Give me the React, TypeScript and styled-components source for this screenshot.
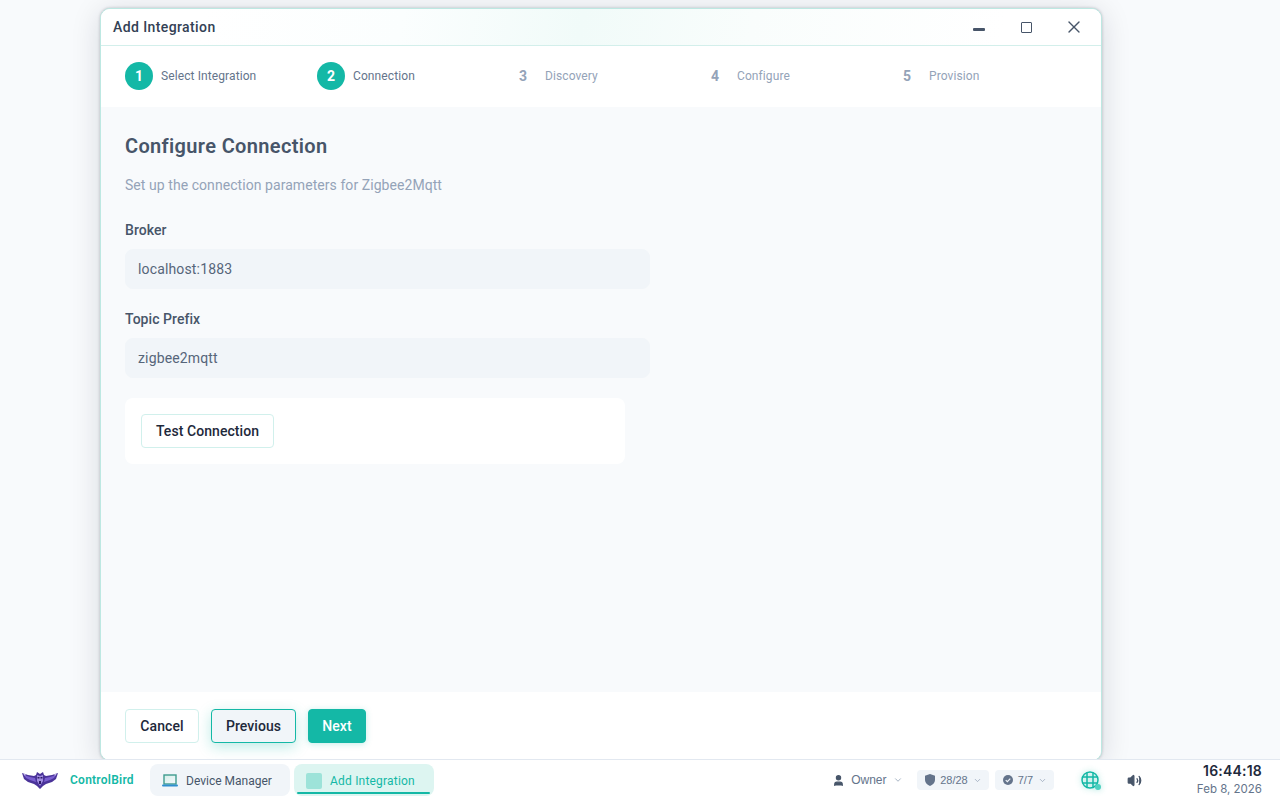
import React from 'react';
import styled, { createGlobalStyle } from 'styled-components';
import { ChevronDown, User, Volume2, X } from 'lucide-react';

const GlobalStyle = createGlobalStyle`
  html, body {
    margin: 0;
    height: 100%;
  }
  body {
    background: #f8fafc;
    font-family: Roboto, "Noto Sans", sans-serif;
    overflow: hidden;
  }
  #root {
    height: 100%;
  }
`;

const steps = [
  { num: 1, label: 'Select Integration', active: true },
  { num: 2, label: 'Connection', active: true },
  { num: 3, label: 'Discovery', active: false },
  { num: 4, label: 'Configure', active: false },
  { num: 5, label: 'Provision', active: false },
];

const fields = [
  { label: 'Broker', value: 'localhost:1883' },
  { label: 'Topic Prefix', value: 'zigbee2mqtt' },
];

const OwlLogo = () => (
  <svg width="36" height="17" viewBox="0 0 36 17">
    <path d="M0 1 L6 3 L12 4 L14 3 L15 0 L18 2 L21 0 L22 3 L24 4 L30 3 L36 1 L34 7 L30 10 L24 12 L21 14 L18 17 L15 14 L12 12 L6 10 L2 7 Z" fill="#4a3399" />
    <path d="M2 3 L8 5 L13 6 L14 10 L8 8 L4 6 Z M34 3 L28 5 L23 6 L22 10 L28 8 L32 6 Z" fill="#7a5fd0" />
    <path d="M1 1.500 L4 2.500 L3 4 Z M35 1.500 L32 2.500 L33 4 Z" fill="#c9bdf0" />
    <path d="M15 3 L18 4 L21 3 L21 9 L18 14 L15 9 Z" fill="#a08ce0" />
    <path d="M15.500 5 h2 v1.500 h-2 Z M18.500 5 h2 v1.500 h-2 Z M17 9 h2 v3 h-2 Z" fill="#2d1c66" />
  </svg>
);

const LaptopIcon = () => (
  <svg width="16" height="13" viewBox="0 0 16 13">
    <defs>
      <linearGradient id="screen" x1="0" y1="0" x2="1" y2="1">
        <stop offset="0" stopColor="#d5efe9" />
        <stop offset="1" stopColor="#f4f8fc" />
      </linearGradient>
    </defs>
    <rect x="2" y="1" width="12" height="9" fill="url(#screen)" stroke="#3f9c8f" strokeWidth="1.400" />
    <rect x="0" y="10.500" width="16" height="2" rx="1" fill="#2f8fd0" />
  </svg>
);

const ShieldIcon = () => (
  <svg width="10" height="12" viewBox="0 0 10 12">
    <path d="M5 0 L10 1.700 V6 C10 9 7.500 11 5 12 C2.500 11 0 9 0 6 V1.700 Z" fill="#64748b" />
  </svg>
);

const CheckBadgeIcon = () => (
  <svg width="10" height="10" viewBox="0 0 11 11">
    <circle cx="5.500" cy="5.500" r="5.500" fill="#64748b" />
    <path d="M3 5.700 L4.800 7.400 L8 4" fill="none" stroke="#f1f5f9" strokeWidth="1.300" />
  </svg>
);

const GlobeIcon = () => (
  <svg width="18" height="18" viewBox="0 0 18 18" fill="none" stroke="#14b8a6" strokeWidth="1.500">
    <circle cx="9" cy="9" r="8" />
    <path d="M1.500 6 H16.500 M1.500 12 H16.500 M6 1.500 V16.500 M12 1.500 V16.500" />
  </svg>
);

const App: React.FC = () => {
  return (
    <Desktop>
      <GlobalStyle />
      <Workspace>
        <Window>
          <TitleBar>
            <Title>Add Integration</Title>
            <WindowControls>
              <ControlButton aria-label="minimize">
                <MinimizeGlyph />
              </ControlButton>
              <ControlButton aria-label="maximize">
                <MaximizeGlyph />
              </ControlButton>
              <ControlButton aria-label="close">
                <X size={20} strokeWidth={1.600} />
              </ControlButton>
            </WindowControls>
          </TitleBar>

          <Stepper>
            {steps.map((step) => (
              <Step key={step.num}>
                <StepBullet $active={step.active}>{step.num}</StepBullet>
                <StepLabel $active={step.active}>{step.label}</StepLabel>
              </Step>
            ))}
          </Stepper>

          <Content>
            <Heading>Configure Connection</Heading>
            <Description>Set up the connection parameters for Zigbee2Mqtt</Description>
            {fields.map((field) => (
              <Field key={field.label}>
                <FieldLabel>{field.label}</FieldLabel>
                <FieldInput defaultValue={field.value} />
              </Field>
            ))}
            <TestCard>
              <TestButton>Test Connection</TestButton>
            </TestCard>
          </Content>

          <Footer>
            <CancelButton>Cancel</CancelButton>
            <PreviousButton>Previous</PreviousButton>
            <NextButton>Next</NextButton>
          </Footer>
        </Window>
      </Workspace>

      <Dock>
        <Brand>
          <OwlLogo />
          <BrandName>ControlBird</BrandName>
        </Brand>
        <Task>
          <LaptopIcon />
          <TaskLabel>Device Manager</TaskLabel>
        </Task>
        <Task $current>
          <TaskSquare />
          <TaskLabel $current>Add Integration</TaskLabel>
          <TaskUnderline />
        </Task>

        <Tray>
          <OwnerMenu>
            <User size={13} fill="#475569" stroke="#475569" />
            <span>Owner</span>
            <ChevronDown size={10} color="#94a3b8" />
          </OwnerMenu>
          <Pills>
            <Pill>
              <ShieldIcon />
              <span>28/28</span>
              <ChevronDown size={9} color="#94a3b8" />
            </Pill>
            <Pill>
              <CheckBadgeIcon />
              <span>7/7</span>
              <ChevronDown size={9} color="#94a3b8" />
            </Pill>
          </Pills>
          <NetworkButton>
            <GlobeIcon />
            <NetworkDot />
          </NetworkButton>
          <VolumeButton>
            <Volume2 size={15} fill="#475569" stroke="#475569" />
          </VolumeButton>
          <Clock>
            <Time>16:44:18</Time>
            <DateText>Feb 8, 2026</DateText>
          </Clock>
        </Tray>
      </Dock>
    </Desktop>
  );
};

export default App;

const Desktop = styled.div`
  display: flex;
  flex-direction: column;
  height: 800px;
`;

const Workspace = styled.main`
  flex: 1;
  min-height: 0;
  padding: 8px 178px 0 100px;
`;

const Window = styled.section`
  display: flex;
  flex-direction: column;
  box-sizing: border-box;
  width: 1002px;
  height: 753px;
  background: #fff;
  border: 1px solid #bde8e2;
  border-radius: 10px;
  box-shadow: 0 0 3px rgba(15, 23, 42, 0.25), 0 4px 30px rgba(15, 23, 42, 0.14);
  overflow: hidden;
`;

const TitleBar = styled.header`
  display: flex;
  align-items: center;
  justify-content: space-between;
  flex: none;
  box-sizing: border-box;
  height: 37px;
  padding: 0 7px 0 12px;
  background: linear-gradient(100deg, #fff 10%, #fbfefe 30%, #f1fbf9 48%, #f9fdfc 65%, #fff 90%);
  border-bottom: 1px solid #d3efeb;
`;

const Title = styled.h1`
  margin: 0;
  font-size: 14px;
  font-weight: 500;
  letter-spacing: 0.4px;
  color: #334155;
`;

const WindowControls = styled.div`
  display: flex;
  gap: 7.500px;
`;

const ControlButton = styled.button`
  display: flex;
  align-items: center;
  justify-content: center;
  width: 40px;
  height: 28px;
  padding: 0;
  background: none;
  border: none;
  color: #475569;
`;

const MinimizeGlyph = styled.span`
  width: 12px;
  height: 3px;
  margin-top: 4px;
  background: #475569;
  border-radius: 1px;
`;

const MaximizeGlyph = styled.span`
  box-sizing: border-box;
  width: 11px;
  height: 11px;
  border: 1.500px solid #475569;
  border-radius: 1px;
`;

const Stepper = styled.nav`
  display: flex;
  flex: none;
  box-sizing: border-box;
  height: 61px;
  align-items: center;
  padding: 0 24px 1px;
  background: #fff;
`;

const Step = styled.div`
  display: flex;
  flex: none;
  align-items: center;
  gap: 8px;
  width: 192px;
`;

const StepBullet = styled.span<{ $active: boolean }>`
  display: flex;
  align-items: center;
  justify-content: center;
  width: 28px;
  height: 28px;
  border-radius: 50%;
  font-size: 14px;
  font-weight: 700;
  color: ${({ $active }) => ($active ? '#fff' : '#94a3b8')};
  background: ${({ $active }) => ($active ? '#14b8a6' : 'transparent')};
`;

const StepLabel = styled.span<{ $active: boolean }>`
  font-size: 12px;
  letter-spacing: 0.1px;
  color: ${({ $active }) => ($active ? '#64748b' : '#94a3b8')};
`;

const Content = styled.div`
  display: flex;
  flex-direction: column;
  flex: 1;
  min-height: 0;
  padding: 24px;
  background: #f8fafc;
`;

const Heading = styled.h2`
  margin: 0;
  font-size: 20px;
  line-height: 30px;
  font-weight: 600;
  letter-spacing: 0.35px;
  color: #475569;
`;

const Description = styled.p`
  margin: 14px 0 0;
  font-size: 14px;
  line-height: 20px;
  letter-spacing: 0.06px;
  color: #94a3b8;
`;

const Field = styled.label`
  display: flex;
  flex-direction: column;
  width: 525px;
  margin-top: 25px;
  & + & {
    margin-top: 20px;
  }
`;

const FieldLabel = styled.span`
  font-size: 14px;
  font-weight: 500;
  line-height: 20px;
  letter-spacing: 0.05px;
  color: #475569;
  margin-bottom: 9px;
`;

const FieldInput = styled.input`
  box-sizing: border-box;
  height: 40px;
  padding: 0 12px;
  background: #f1f5f9;
  border: 1px solid #f1f5f9;
  border-radius: 8px;
  font-family: inherit;
  font-size: 14px;
  letter-spacing: 0.15px;
  color: #56657a;
  outline: none;
`;

const TestCard = styled.div`
  box-sizing: border-box;
  width: 500px;
  height: 66px;
  margin-top: 20px;
  padding: 16px;
  background: #fff;
  border-radius: 8px;
`;

const ButtonBase = styled.button`
  box-sizing: border-box;
  height: 34px;
  padding: 0;
  border-radius: 4px;
  font-family: inherit;
  font-size: 14px;
  font-weight: 500;
  letter-spacing: 0.07px;
`;

const TestButton = styled(ButtonBase)`
  width: 133px;
  background: #fff;
  border: 1px solid #d1f0ec;
  color: #1e293b;
`;

const Footer = styled.footer`
  display: flex;
  flex: none;
  align-items: center;
  gap: 12px;
  box-sizing: border-box;
  height: 68px;
  padding: 0 24px;
  background: #fff;
`;

const CancelButton = styled(ButtonBase)`
  width: 74px;
  background: #fff;
  border: 1px solid #d1f0ec;
  color: #1e293b;
`;

const PreviousButton = styled(ButtonBase)`
  width: 85px;
  background: #f1f5f9;
  border: 1px solid #14b8a6;
  color: #1e293b;
  box-shadow: 0 4px 14px rgba(20, 184, 166, 0.28);
`;

const NextButton = styled(ButtonBase)`
  width: 58px;
  background: #14b8a6;
  border: 1px solid #14b8a6;
  color: #fff;
  box-shadow: 0 1px 6px rgba(20, 184, 166, 0.25);
`;

const Dock = styled.footer`
  display: flex;
  flex: none;
  align-items: center;
  box-sizing: border-box;
  height: 41px;
  padding: 0 18px 0 22px;
  background: #fff;
  border-top: 1px solid #e2e8f0;
`;

const Brand = styled.div`
  display: flex;
  align-items: center;
  gap: 12px;
  width: 128px;
`;

const BrandName = styled.span`
  font-size: 12px;
  font-weight: 600;
  letter-spacing: 0.25px;
  color: #14b8a6;
`;

const Task = styled.div<{ $current?: boolean }>`
  position: relative;
  display: flex;
  align-items: center;
  gap: 8px;
  box-sizing: border-box;
  height: 32px;
  width: 140px;
  margin-right: 4px;
  padding: 1px 12px 0;
  border-radius: 8px;
  background: ${({ $current }) => ($current ? '#ddf5f1' : '#f1f5f9')};
`;

const TaskLabel = styled.span<{ $current?: boolean }>`
  font-size: 12px;
  letter-spacing: ${({ $current }) => ($current ? '0.2px' : '0')};
  color: ${({ $current }) => ($current ? '#14b8a6' : '#475569')};
`;

const TaskSquare = styled.span`
  width: 16px;
  height: 16px;
  border-radius: 2px;
  background: #9de3d9;
`;

const TaskUnderline = styled.span`
  position: absolute;
  left: 3px;
  right: 4px;
  bottom: 2px;
  height: 2px;
  background: #14b8a6;
  border-radius: 1px;
`;

const Tray = styled.div`
  display: flex;
  align-items: center;
  margin-left: auto;
`;

const OwnerMenu = styled.div`
  display: flex;
  align-items: center;
  gap: 6px;
  width: 85px;
  font-family: "Liberation Sans", sans-serif;
  font-size: 12px;
  color: #64748b;
`;

const Pills = styled.div`
  display: flex;
  gap: 6px;
`;

const Pill = styled.div`
  display: flex;
  align-items: center;
  gap: 5px;
  box-sizing: border-box;
  height: 20px;
  padding: 0 7px 0 8px;
  background: #f1f5f9;
  border-radius: 4px;
  font-family: "Liberation Sans", sans-serif;
  font-size: 11px;
  color: #64748b;
`;

const NetworkButton = styled.div`
  position: relative;
  display: flex;
  margin-left: 27px;
  filter: drop-shadow(0 0 3px rgba(20, 184, 166, 0.4));
`;

const NetworkDot = styled.span`
  position: absolute;
  right: -2px;
  bottom: -1px;
  width: 6px;
  height: 6px;
  border-radius: 50%;
  background: #4fd1c0;
`;

const VolumeButton = styled.div`
  display: flex;
  margin-left: 28px;
`;

const Clock = styled.div`
  display: flex;
  flex-direction: column;
  align-items: flex-end;
  width: 100px;
  margin-left: 20px;
`;

const Time = styled.span`
  font-family: Inter, sans-serif;
  font-size: 14px;
  line-height: 18px;
  font-weight: 600;
  letter-spacing: 0.2px;
  color: #1e293b;
`;

const DateText = styled.span`
  font-family: Inter, sans-serif;
  font-size: 11.500px;
  line-height: 18px;
  color: #64748b;
`;
